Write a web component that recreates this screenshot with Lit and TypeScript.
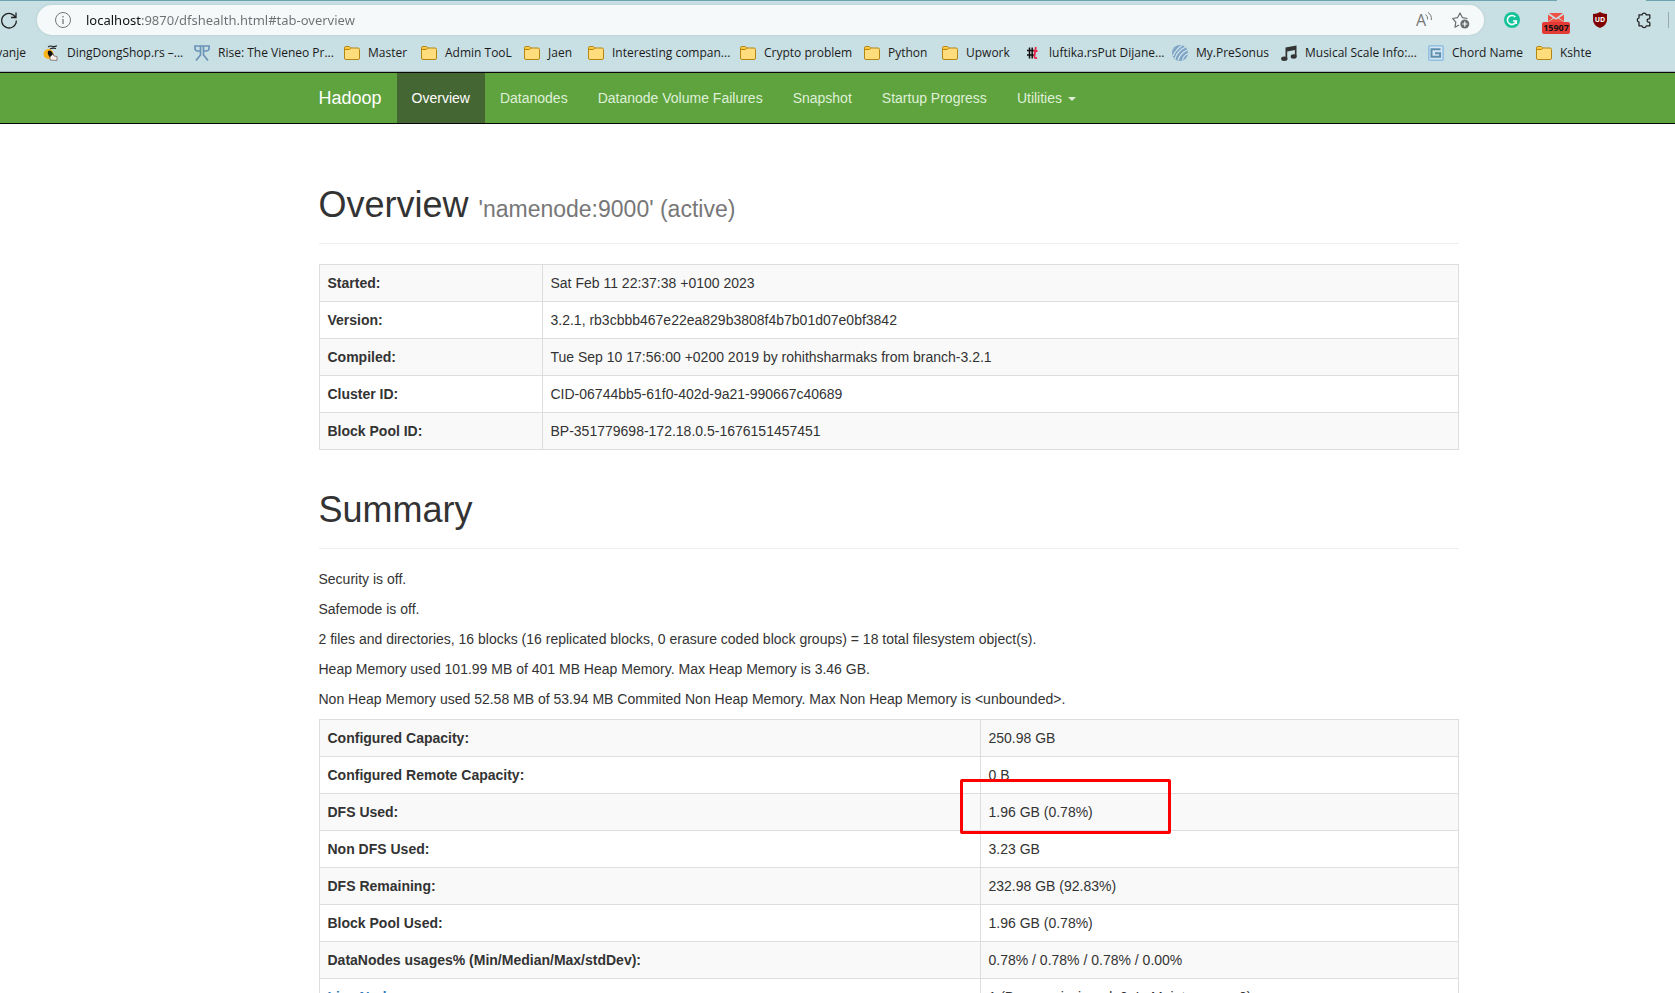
import { LitElement, html, css, TemplateResult } from "lit";
import { customElement } from "lit/decorators.js";

const folderIcon = html`<svg class="icon" viewBox="0 0 16 16" aria-hidden="true">
  <path d="M.5 3A1.500 1.500 0 0 1 2 1.500h3.200L7 3h7a1.500 1.500 0 0 1 1.500 1.500v8.500a1.500 1.500 0 0 1-1.500 1.500H2A1.500 1.500 0 0 1 .5 13z" fill="#ffdc7c" stroke="#b8860f"/>
  <path d="M1 4.500h4.200L7 3" fill="none" stroke="#b8860f"/>
  <path d="M1.300 2.500h3.700l1 .8-1 .8H1.300z" fill="#fcc42c"/>
</svg>`;

const shopIcon = html`<svg class="icon" viewBox="0 0 16 16" aria-hidden="true">
  <path d="M5 2q2-1.500 4-.7t5-.5M7 4q2-1.500 6-.5" fill="none" stroke="#222" stroke-width="1.100"/>
  <circle cx="5.500" cy="9" r="5" fill="#fbb51c"/>
  <path d="M5 6q2.500-1.500 4 1t2 4l-4 1.500Q4 9 5 6z" fill="#111"/>
  <path d="M7 15V12l3-3 1 2 3 .5v4z" fill="#f7eee9" stroke="#6b5752" stroke-width=".7"/>
</svg>`;

const riseIcon = html`<svg class="icon" viewBox="0 0 16 16" aria-hidden="true">
  <path d="M6.500 6H3.500a2.500 2.500 0 0 1-2.500-2.500V1h14v2.500A2.500 2.500 0 0 1 12.500 6H9.500M6.500 1v9L2 15.500M9.500 1v9l4.500 5.500" fill="none" stroke="#6a93b8" stroke-width="1.700"/>
</svg>`;

const hashIcon = html`<svg class="icon" viewBox="0 0 16 16" aria-hidden="true">
  <path d="M4.500 2.500v11M2 5.500h7M2 10h7M7.200 2.500v11" fill="none" stroke="#111" stroke-width="1.500"/>
  <path d="M10.800 2l-1.400 9.500q0 2 2.600 1.500M8.500 6h4" fill="none" stroke="#e8274b" stroke-width="1.800"/>
</svg>`;

const sphereIcon = html`<svg class="icon" viewBox="0 0 16 16" aria-hidden="true">
  <circle cx="8" cy="8" r="8" fill="#7fa6c5"/>
  <path d="M1 11Q4 4 10 .5M3 14Q5 6 13.500 2M6 15.500Q8 8 15.500 5M10.500 15.500Q11 11 15.800 8.500" fill="none" stroke="#d5e6ef" stroke-width="1.100"/>
</svg>`;

const musicIcon = html`<svg class="icon" viewBox="0 0 16 16" aria-hidden="true">
  <path d="M4.500 2.500L15.500.5v10.800h-1.600V5L6.200 6.500v7H4.500z" fill="#333"/>
  <ellipse cx="3.300" cy="13.700" rx="3.200" ry="2.200" fill="#333"/>
  <ellipse cx="12.700" cy="11.500" rx="3" ry="2.200" fill="#333"/>
</svg>`;

const chordIcon = html`<svg class="icon" viewBox="0 0 16 16" aria-hidden="true">
  <rect x=".8" y=".8" width="14.400" height="14.400" rx="1" fill="#d3e6f3" stroke="#92c0e3" stroke-width="1.600"/>
  <path d="M12.500 4.200h-9v7.600h8.600V8.300H7" fill="none" stroke="#5f8fae" stroke-width="2"/>
</svg>`;

const bookmarks: { label: string; icon: TemplateResult }[] = [
  { label: "DingDongShop.rs –...", icon: shopIcon },
  { label: "Rise: The Vieneo Pr...", icon: riseIcon },
  { label: "Master", icon: folderIcon },
  { label: "Admin TooL", icon: folderIcon },
  { label: "Jaen", icon: folderIcon },
  { label: "Interesting compan...", icon: folderIcon },
  { label: "Crypto problem", icon: folderIcon },
  { label: "Python", icon: folderIcon },
  { label: "Upwork", icon: folderIcon },
  { label: "luftika.rsPut Dijane...", icon: hashIcon },
  { label: "My.PreSonus", icon: sphereIcon },
  { label: "Musical Scale Info:...", icon: musicIcon },
  { label: "Chord Name", icon: chordIcon },
  { label: "Kshte", icon: folderIcon },
];

@customElement("browser-chrome")
export class BrowserChrome extends LitElement {
  static styles = css`
    :host {
      display: block;
      background: #c8dfe3;
      border-bottom: 1px solid #9fb3b8;
      font-family: "Open Sans", "Noto Sans", sans-serif;
      color: #1b1b1b;
    }
    .tab-edge {
      display: flex;
      justify-content: space-between;
      height: 1px;
    }
    .tab-edge span { background: #6fa3b0; width: 29px; }
    .tab-edge span:first-child { flex: 1; margin-right: 89px; }
    button {
      border: 0;
      padding: 0;
      background: none;
      display: flex;
      align-items: center;
      justify-content: center;
      font: inherit;
      color: inherit;
    }
    svg { display: block; overflow: visible; }
    .toolbar {
      display: flex;
      align-items: center;
      padding: 4px 6px 0 0;
    }
    .reload { width: 18px; height: 30px; margin-right: 19px; }
    .address {
      flex: 1;
      display: flex;
      align-items: center;
      height: 30px;
      box-sizing: border-box;
      padding: 0 14px 0 18px;
      border-radius: 15px;
      background: #f5f9fa;
      box-shadow: 0 0 3px #b4ccd1;
    }
    .url {
      flex: 1;
      min-width: 0;
      height: 20px;
      margin-left: 15px;
      padding: 0;
      border: 0;
      outline: 0;
      font: 13px/20px "Noto Sans", "Open Sans", sans-serif;
      color: transparent;
      caret-color: #000;
      background: linear-gradient(90deg, #111 56px, #6d7072 56px);
      -webkit-background-clip: text;
      background-clip: text;
    }
    .read { width: 16px; height: 20px; margin-right: 20px; }
    .star { width: 18px; height: 20px; }
    .extensions { display: flex; margin-left: 6px; }
    .extensions button { width: 44px; height: 30px; }
    .mail { flex-direction: column; }
    .count {
      width: 28px;
      height: 12px;
      border-radius: 2px;
      background: #e53935;
      font: bold 9px/12px "Open Sans", sans-serif;
      text-align: center;
      color: #111;
    }
    .mail svg { margin-top: 7px; }
    .divider { width: 1px; height: 16px; margin-left: 2px; background: #96a9ad; }
    .bookmarks {
      display: grid;
      grid-template-columns: 26px 151px 150px 77px 103px 64px 152px 124px 78px 83px 147px 109px 147px 108px auto;
      height: 36px;
      align-items: center;
      overflow: hidden;
      white-space: nowrap;
      font-size: 12px;
      line-height: 16px;
    }
    .bookmarks a {
      display: flex;
      align-items: center;
      gap: 8px;
      padding-left: 17px;
      color: inherit;
      text-decoration: none;
    }
    .bookmarks .partial { padding: 0; justify-content: flex-end; }
    .icon { width: 16px; height: 16px; flex: none; }
    .mark { font: 16px "Open Sans", sans-serif; fill: #777; }
    .shield-text { font: bold 7px "Open Sans", sans-serif; fill: #fff; }
  `;

  render() {
    return html`
      <div class="tab-edge"><span></span><span></span></div>
      <div class="toolbar">
        <button class="reload" aria-label="Reload">
          <svg width="18" height="18" viewBox="0 0 18 18" fill="none" stroke="#222" stroke-width="1.300">
            <path d="M15.800 7A7.300 7.300 0 1 0 16.300 9.500M16 1.500V6.500H11"/>
          </svg>
        </button>
        <div class="address">
          <svg width="16" height="16" viewBox="0 0 16 16" fill="none" stroke="#757879">
            <circle cx="8" cy="8" r="7.500"/><path d="M8 7v5M8 4v1.500" stroke-width="1.300"/>
          </svg>
          <input class="url" type="text" aria-label="Address" spellcheck="false" value="localhost:9870/dfshealth.html#tab-overview" />
          <button class="read" aria-label="Read aloud">
            <svg width="16" height="18" viewBox="0 0 16 18">
              <text class="mark" x="0" y="15">A</text>
              <path d="M9.500 3.500q2.500 1.500 2 5M12 1.500q4 2.500 3.300 7.500" fill="none" stroke="#777"/>
            </svg>
          </button>
          <button class="star" aria-label="Add to favorites">
            <svg width="18" height="18" viewBox="0 0 18 18">
              <path d="M7 14l-4 2.200.8-5L.7 7.500l4.800-.8L8 2l2.500 4.700 5 .8" fill="none" stroke="#6b6e70" stroke-width="1.200" stroke-linejoin="round"/>
              <circle cx="12.800" cy="13" r="4.500" fill="#6b6e70"/>
              <path d="M12.800 10.500v5M10.300 13h5" stroke="#fff" stroke-width="1.200"/>
            </svg>
          </button>
        </div>
        <div class="extensions">
          <button aria-label="Grammarly">
            <svg width="16" height="16" viewBox="0 0 16 16">
              <circle cx="8" cy="8" r="8" fill="#15c39a"/>
              <path d="M11.300 5A4.500 4.500 0 1 0 12.300 9H9M12.300 9v3" fill="none" stroke="#fff" stroke-width="1.500"/>
            </svg>
          </button>
          <button class="mail" aria-label="Mail">
            <svg width="16" height="9" viewBox="0 0 16 9">
              <path d="M1 0h14L8 5zM0 1.500L5 5 0 8.500zM16 1.500L11 5l5 3.500zM0 9l6-3.500 2 1.300 2-1.300L16 9z" fill="#ef5245"/>
            </svg>
            <span class="count">15907</span>
          </button>
          <button aria-label="uBlock Origin">
            <svg width="14" height="16" viewBox="0 0 14 16">
              <path d="M7 0q3 2 7 2v6q0 5-7 8Q0 13 0 8V2q4 0 7-2z" fill="#800000"/>
              <text class="shield-text" x="7" y="10" text-anchor="middle">UD</text>
            </svg>
          </button>
          <button aria-label="Extensions">
            <svg width="16" height="16" viewBox="0 0 16 16" fill="none" stroke="#222" stroke-width="1.300" stroke-linejoin="round">
              <path d="M3 2.800h3a2.200 2.200 0 0 1 4.300 0h3.500v3.400a1 1 0 0 1-1 .6 1.700 1.700 0 0 0 0 3.400 1 1 0 0 1 1 .6v3h-3.500a2.200 2.200 0 0 1-4.300 0H3v-3.600a2.200 2.200 0 0 1 0-4.300z"/>
            </svg>
          </button>
        </div>
        <span class="divider"></span>
      </div>
      <nav class="bookmarks" aria-label="Favorites">
        <a class="partial" href="#">vanje</a>
        ${bookmarks.map((b) => html`<a href="#">${b.icon}<span>${b.label}</span></a>`)}
      </nav>
    `;
  }
}

const navLinks = ["Overview", "Datanodes", "Datanode Volume Failures", "Snapshot", "Startup Progress"];

const overviewRows = [
  ["Started:", "Sat Feb 11 22:37:38 +0100 2023"],
  ["Version:", "3.2.1, rb3cbbb467e22ea829b3808f4b7b01d07e0bf3842"],
  ["Compiled:", "Tue Sep 10 17:56:00 +0200 2019 by rohithsharmaks from branch-3.2.1"],
  ["Cluster ID:", "CID-06744bb5-61f0-402d-9a21-990667c40689"],
  ["Block Pool ID:", "BP-351779698-172.18.0.5-1676151457451"],
];

const summaryLines = [
  "Security is off.",
  "Safemode is off.",
  "2 files and directories, 16 blocks (16 replicated blocks, 0 erasure coded block groups) = 18 total filesystem object(s).",
  "Heap Memory used 101.99 MB of 401 MB Heap Memory. Max Heap Memory is 3.46 GB.",
  "Non Heap Memory used 52.58 MB of 53.94 MB Commited Non Heap Memory. Max Non Heap Memory is <unbounded>.",
];

interface SummaryRow {
  name: string;
  value: string;
  link?: boolean;
  marked?: boolean;
}

const summaryRows: SummaryRow[] = [
  { name: "Configured Capacity:", value: "250.98 GB" },
  { name: "Configured Remote Capacity:", value: "0 B" },
  { name: "DFS Used:", value: "1.96 GB (0.78%)", marked: true },
  { name: "Non DFS Used:", value: "3.23 GB" },
  { name: "DFS Remaining:", value: "232.98 GB (92.83%)" },
  { name: "Block Pool Used:", value: "1.96 GB (0.78%)" },
  { name: "DataNodes usages% (Min/Median/Max/stdDev):", value: "0.78% / 0.78% / 0.78% / 0.00%" },
  { name: "Live Nodes", value: "1 (Decommissioned: 0, In Maintenance: 0)", link: true },
];

@customElement("app-root")
export class AppRoot extends LitElement {
  static styles = css`
    :host {
      display: flex;
      flex-direction: column;
      height: 100vh;
      overflow: hidden;
      background: #fff;
      color: #333;
      font: 14px/20px "Liberation Sans", Arial, sans-serif;
    }
    browser-chrome { flex: none; }
    .navbar {
      flex: none;
      background: #5fa33e;
      border: solid #080808;
      border-width: 1px 0;
      padding-left: 102px;
    }
    .container { max-width: 1140px; margin: 0 auto; }
    .navbar .container { display: flex; }
    .navbar a {
      padding: 15px;
      color: #dff0d8;
      text-decoration: none;
      white-space: nowrap;
    }
    .navbar .brand { padding-left: 0; font-size: 18px; color: #fff; }
    .navbar .active { background: #446633; color: #fff; }
    .caret {
      display: inline-block;
      margin-left: 6px;
      vertical-align: middle;
      border: 4px solid transparent;
      border-top-color: currentColor;
      border-bottom: 0;
    }
    main {
      flex: 1;
      min-height: 0;
      overflow: hidden;
      padding: 21px 0 0 102px;
    }
    .page-header {
      margin: 40px 0 20px;
      padding-bottom: 19px;
      border-bottom: 1px solid #eee;
    }
    h1 { margin: 0; font-size: 36px; line-height: 39px; font-weight: 500; }
    small { font-size: 23px; line-height: 23px; font-weight: 400; color: #777; }
    p { margin: 0 0 10px; }
    table {
      width: 100%;
      border-collapse: collapse;
      table-layout: fixed;
    }
    th, td {
      padding: 8px;
      border: 1px solid #ddd;
      text-align: left;
      vertical-align: top;
    }
    tr:nth-child(odd) { background: #f9f9f9; }
    .narrow th { width: 206px; }
    .wide th { width: 644px; }
    th a { color: #337ab7; text-decoration: none; }
    .marked { position: relative; display: block; }
    .marked::after {
      content: "";
      position: absolute;
      left: -29px;
      top: -23px;
      width: 205px;
      height: 49px;
      border: 3px solid #f00;
      border-radius: 2px;
      pointer-events: none;
    }
  `;

  render() {
    return html`
      <browser-chrome></browser-chrome>
      <header class="navbar">
        <nav class="container">
          <a class="brand" href="#">Hadoop</a>
          ${navLinks.map((name, i) => html`<a class=${i === 0 ? "active" : ""} href="#">${name}</a>`)}
          <a href="#">Utilities<span class="caret"></span></a>
        </nav>
      </header>
      <main>
        <div class="container">
          <div class="page-header"><h1>Overview <small>'namenode:9000' (active)</small></h1></div>
          <table class="narrow">
            <tbody>
              ${overviewRows.map(([k, v]) => html`<tr><th scope="row">${k}</th><td>${v}</td></tr>`)}
            </tbody>
          </table>
          <div class="page-header"><h1>Summary</h1></div>
          ${summaryLines.map((line) => html`<p>${line}</p>`)}
          <table class="wide">
            <tbody>
              ${summaryRows.map((r) => html`<tr>
                <th scope="row">${r.link ? html`<a href="#">${r.name}</a>` : r.name}</th>
                <td>${r.marked ? html`<span class="marked">${r.value}</span>` : r.value}</td>
              </tr>`)}
            </tbody>
          </table>
        </div>
      </main>
    `;
  }
}
